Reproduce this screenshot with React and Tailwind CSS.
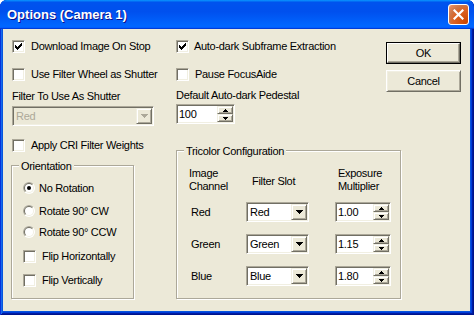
import React from "react";

const SUNKEN =
  "border border-t-[#ACA899] border-l-[#ACA899] border-r-white border-b-white shadow-[inset_1px_1px_0_#716F64,inset_-1px_-1px_0_#F1EFE2]";
const RAISED =
  "border border-t-[#F1EFE2] border-l-[#F1EFE2] border-r-[#716F64] border-b-[#716F64] shadow-[inset_1px_1px_0_#fff,inset_-1px_-1px_0_#ACA899] bg-[#ECE9D8]";

function CheckMark() {
  const cols = [2, 3, 4, 3, 2, 1, 0];
  return (
    <svg width="7" height="7" viewBox="0 0 7 7" shapeRendering="crispEdges">
      {cols.map((y, x) => (
        <rect key={x} x={x} y={y} width="1" height="3" fill="#000" />
      ))}
    </svg>
  );
}

function CheckBox({ checked }) {
  return (
    <div className={`w-[13px] h-[13px] shrink-0 bg-white flex items-center justify-center ${SUNKEN}`}>
      {checked && <CheckMark />}
    </div>
  );
}

function Check({ checked, label, className = "", gap = "ml-[6px]" }) {
  return (
    <div className={`flex items-center h-[13px] ${className}`}>
      <CheckBox checked={checked} />
      <span className={`${gap} leading-[13px] whitespace-nowrap`}>{label}</span>
    </div>
  );
}

function RadioDot({ checked }) {
  return (
    <svg width="12" height="12" viewBox="0 0 12 12" className="shrink-0">
      <circle cx="6" cy="6" r="6" fill="#fff" />
      <path d="M1.757 10.243 A6 6 0 0 1 10.243 1.757 Z" fill="#ACA899" />
      <circle cx="6" cy="6" r="5" fill="#F1EFE2" />
      <path d="M2.464 9.536 A5 5 0 0 1 9.536 2.464 Z" fill="#716F64" />
      <circle cx="6" cy="6" r="4" fill="#fff" />
      {checked && <circle cx="6" cy="6" r="2" fill="#000" />}
    </svg>
  );
}

function Radio({ checked, label, className = "" }) {
  return (
    <div className={`flex items-center h-[12px] ${className}`}>
      <RadioDot checked={checked} />
      <span className="ml-[4px] leading-[13px] whitespace-nowrap">{label}</span>
    </div>
  );
}

function DownArrow({ color = "#000" }) {
  return (
    <svg width="7" height="4" viewBox="0 0 7 4" shapeRendering="crispEdges">
      <rect x="0" y="0" width="7" height="1" fill={color} />
      <rect x="1" y="1" width="5" height="1" fill={color} />
      <rect x="2" y="2" width="3" height="1" fill={color} />
      <rect x="3" y="3" width="1" height="1" fill={color} />
    </svg>
  );
}

function Combo({ value, disabled, className = "" }) {
  return (
    <div
      className={`h-[20px] flex items-stretch p-[1px] ${SUNKEN} ${
        disabled ? "bg-[#ECE9D8]" : "bg-white"
      } ${className}`}
    >
      <span
        className={`flex-1 pl-[2px] leading-[16px] ${disabled ? "text-[#ACA899]" : "text-black"}`}
      >
        {value}
      </span>
      <div className={`w-[16px] flex items-center justify-center ${RAISED}`}>
        <DownArrow color={disabled ? "#ACA899" : "#000"} />
      </div>
    </div>
  );
}

function TinyArrow({ up }) {
  return (
    <svg width="5" height="3" viewBox="0 0 5 3" shapeRendering="crispEdges">
      {up ? (
        <>
          <rect x="2" y="0" width="1" height="1" fill="#000" />
          <rect x="1" y="1" width="3" height="1" fill="#000" />
          <rect x="0" y="2" width="5" height="1" fill="#000" />
        </>
      ) : (
        <>
          <rect x="0" y="0" width="5" height="1" fill="#000" />
          <rect x="1" y="1" width="3" height="1" fill="#000" />
          <rect x="2" y="2" width="1" height="1" fill="#000" />
        </>
      )}
    </svg>
  );
}

function Spin({ value, className = "" }) {
  return (
    <div className={`h-[20px] flex items-stretch p-[1px] bg-white ${SUNKEN} ${className}`}>
      <span className="flex-1 pl-[1px] leading-[16px]">{value}</span>
      <div className="w-[16px] flex flex-col">
        <div className={`flex-1 flex items-center justify-center ${RAISED}`}>
          <TinyArrow up />
        </div>
        <div className={`flex-1 flex items-center justify-center ${RAISED}`}>
          <TinyArrow />
        </div>
      </div>
    </div>
  );
}

function Group({ label, className = "", children }) {
  return (
    <div
      className={`relative border border-[#ACA899] shadow-[inset_1px_1px_0_#fff,1px_1px_0_#fff] ${className}`}
    >
      <span className="absolute -top-[6px] left-[7px] px-[2px] bg-[#ECE9D8] leading-[13px] whitespace-nowrap">
        {label}
      </span>
      {children}
    </div>
  );
}

function TriRow({ name, slot, mult, className = "" }) {
  return (
    <div className={`flex items-center h-[20px] ${className}`}>
      <div className="w-[57px]">
        <span className="ml-[2px]">{name}</span>
      </div>
      <div className="w-[89px]">
        <Combo value={slot} className="w-[63px]" />
      </div>
      <Spin value={mult} className="w-[56px]" />
    </div>
  );
}

export default function App() {
  return (
    <div className="w-[474px] h-[315px] flex flex-col bg-[#0855DD] rounded-t-[7px] overflow-hidden shadow-[inset_1px_1px_0_#0831D9,inset_-1px_-1px_0_#00138C,inset_2px_2px_0_#166AEE,inset_-2px_-2px_0_#001EA0,inset_3px_3px_0_#0855DD,inset_-3px_-3px_0_#003BDA] font-['Liberation_Sans',Arial,sans-serif]">
      {/* Title bar */}
      <div className="h-[29px] shrink-0 flex items-center pl-[7px] pr-[5px] bg-[linear-gradient(to_bottom,#0997FF_0%,#0053EE_8%,#0050EE_40%,#0066FF_88%,#0066FF_93%,#005BFF_95%,#003DD7_96%,#003DD7_100%)]">
        <span className="text-white font-bold text-[13px] leading-[16px] [text-shadow:1px_1px_0_#0F1089] mt-[1px]">
          Options (Camera 1)
        </span>
        <div className="ml-auto w-[21px] h-[21px] rounded-[3px] border border-white bg-[radial-gradient(circle_at_90%_90%,#CC4600_0%,#DC6527_55%,#CD7546_70%,#E68A5C_90%,#FFFFFF_110%)] flex items-center justify-center">
          <svg width="11" height="11" viewBox="0 0 11 11">
            <path d="M1.5 1.5 L9.5 9.5 M9.5 1.5 L1.5 9.5" stroke="#fff" strokeWidth="2.2" strokeLinecap="square" />
          </svg>
        </div>
      </div>

      {/* Client area */}
      <div className="flex-1 ml-[3px] mr-[4px] mb-[4px] bg-[#ECE9D8] text-black text-[11px] tracking-[-0.3px] leading-[13px] flex pt-[11px] pl-[9px] pr-[9px]">
        {/* Left column */}
        <div className="w-[142px] shrink-0 flex flex-col">
          <Check checked label="Download Image On Stop" />
          <Check label="Use Filter Wheel as Shutter" className="mt-[15px]" />
          <div className="mt-[9px] h-[13px] whitespace-nowrap">Filter To Use As Shutter</div>
          <Combo value="Red" disabled className="mt-[3px] w-[142px]" />
          <Check label="Apply CRI Filter Weights" className="mt-[13px]" />
          <Group label="Orientation" className="mt-[13px] -ml-px w-[123px] h-[134px] pt-[16px] pl-[11px]">
            <Radio checked label="No Rotation" />
            <Radio label="Rotate 90° CW" className="mt-[11px]" />
            <Radio label="Rotate 90° CCW" className="mt-[9px]" />
            <Check label="Flip Horizontally" className="mt-[12px]" />
            <Check label="Flip Vertically" className="mt-[11px]" />
          </Group>
        </div>

        {/* Right area */}
        <div className="ml-[22px] flex-1 flex flex-col">
          <div className="flex">
            <div className="w-[210px] flex flex-col">
              <Check checked label="Auto-dark Subframe Extraction" gap="ml-[5px]" />
              <Check label="Pause FocusAide" className="mt-[15px]" />
              <div className="mt-[8px] h-[13px] whitespace-nowrap">Default Auto-dark Pedestal</div>
              <Spin value="100" className="mt-[2px] w-[59px]" />
            </div>
            <div className="w-[75px] flex flex-col pt-[2px]">
              <button className="h-[22px] w-[75px] border border-black p-0">
                <div className="h-full w-full border border-t-white border-l-white border-r-[#716F64] border-b-[#716F64] shadow-[inset_-1px_-1px_0_#ACA899] flex items-center justify-center">
                  OK
                </div>
              </button>
              <button className="mt-[6px] h-[22px] w-[75px] border border-t-white border-l-white border-r-[#716F64] border-b-[#716F64] shadow-[inset_1px_1px_0_#F1EFE2,inset_-1px_-1px_0_#ACA899] flex items-center justify-center">
                Cancel
              </button>
            </div>
          </div>

          <Group label="Tricolor Configuration" className="mt-[26px] w-[225px] h-[149px] pt-[16px] pl-[12px]">
            <div className="flex items-start">
              <div className="w-[57px] leading-[13px]">
                Image
                <br />
                Channel
              </div>
              <div className="w-[89px] pt-[8px]">
                <span className="ml-[6px]">Filter Slot</span>
              </div>
              <div className="leading-[13px] ml-[3px]">
                Exposure
                <br />
                Multiplier
              </div>
            </div>
            <TriRow name="Red" slot="Red" mult="1.00" className="mt-[9px]" />
            <TriRow name="Green" slot="Green" mult="1.15" className="mt-[12px]" />
            <TriRow name="Blue" slot="Blue" mult="1.80" className="mt-[12px]" />
          </Group>
        </div>
      </div>
    </div>
  );
}
